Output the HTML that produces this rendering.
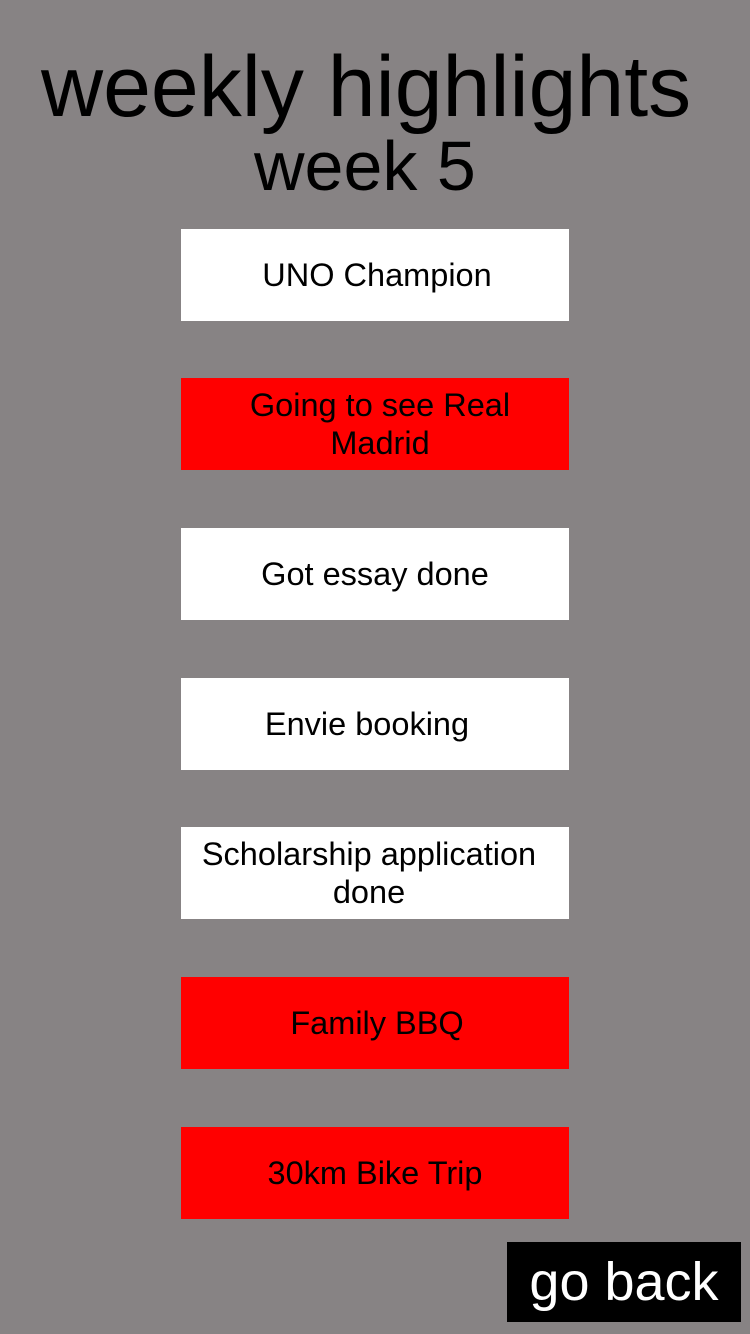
<!DOCTYPE html>
<html><head><meta charset="utf-8"><style>
body{margin:0;width:750px;height:1334px;background:#878384;position:relative;overflow:hidden;font-family:"Liberation Sans",Arial,sans-serif;color:#000}
.t{position:absolute;white-space:nowrap;line-height:1}
.b{position:absolute;left:181px;width:388px;height:92px;display:flex;align-items:center;justify-content:center;text-align:center;font-size:32.5px;line-height:38px}
.w{background:#fff}.r{background:#ff0000}
</style></head><body>
<div class="t" style="left:41px;top:44px;font-size:86px">weekly highlights</div>
<div class="t" style="left:254px;top:131px;font-size:70px">week 5</div>
<div class="b w" style="top:229px;padding-left:4px;box-sizing:border-box">UNO Champion</div>
<div class="b r" style="top:378px;padding-left:10px;box-sizing:border-box">Going to see Real<br>Madrid</div>
<div class="b w" style="top:528px">Got essay done</div>
<div class="b w" style="top:678px;padding-right:16px;box-sizing:border-box">Envie booking</div>
<div class="b w" style="top:827px;padding-right:12px;box-sizing:border-box">Scholarship application<br>done</div>
<div class="b r" style="top:977px;padding-left:4px;box-sizing:border-box">Family BBQ</div>
<div class="b r" style="top:1127px">30km Bike Trip</div>
<div style="position:absolute;left:507px;top:1242px;width:234px;height:80px;background:#000;color:#fff;font-size:54px;display:flex;align-items:center;justify-content:center">go back</div>
</body></html>
